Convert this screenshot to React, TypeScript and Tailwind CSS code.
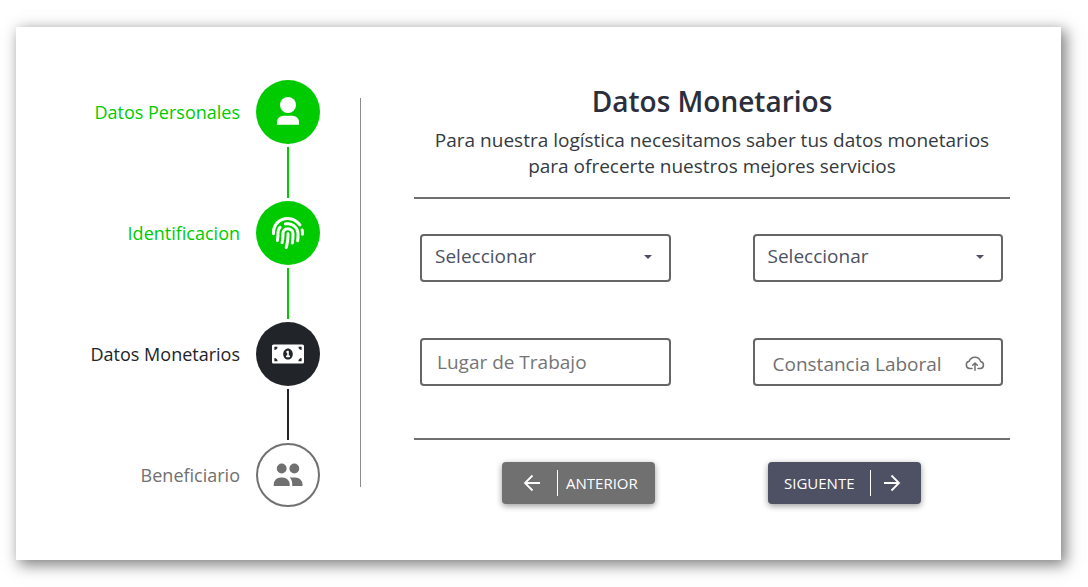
import type { ReactNode } from "react";
import { FaFingerprint, FaMoneyBillAlt } from "react-icons/fa";

type Tone = "done" | "current" | "pending";

const PersonIcon = () => (
  <svg viewBox="0 0 32 32" className="size-8" fill="currentColor" aria-hidden="true">
    <circle cx="16" cy="9" r="8" />
    <path d="M5 28.700v-2.500a6.500 6.500 0 0 1 6.500-6.500h9a6.500 6.500 0 0 1 6.500 6.500v2.500z" />
  </svg>
);

const GroupIcon = () => (
  <svg viewBox="0 0 32 32" className="size-8" fill="currentColor" aria-hidden="true">
    <circle cx="9.700" cy="9.500" r="4.900" />
    <circle cx="22.300" cy="9.500" r="4.900" />
    <path d="M1.700 27v-1.500a7 7 0 0 1 7-7h2a7 7 0 0 1 7 7V27z" />
    <path d="M20.200 27v-2.200c0-2.500-1-4.700-2.600-6.300h5.900a7 7 0 0 1 7 7V27z" />
  </svg>
);

const CloudUploadIcon = () => (
  <svg viewBox="0 0 20 20" className="size-5" fill="none" stroke="currentColor" strokeWidth="1.500" strokeLinecap="round" strokeLinejoin="round" aria-hidden="true">
    <path d="M7 14.500H4.800a3.700 3.700 0 0 1-.6-7.300A6 6 0 0 1 15.600 7.400a3.600 3.600 0 0 1-.4 7.100H13" />
    <path d="M10 16.200V9.300M7.700 11.300 10 9l2.300 2.300" />
  </svg>
);

const ArrowIcon = ({ back = false }: { back?: boolean }) => (
  <svg viewBox="0 0 18 18" className="size-[18px]" fill="none" stroke="currentColor" strokeWidth="1.800" aria-hidden="true">
    <path d={back ? "M17 9H2M9.500 1.500 2 9l7.500 7.500" : "M1 9H16M8.500 1.500 16 9l-7.500 7.500"} />
  </svg>
);

const steps: { label: string; tone: Tone; icon: ReactNode }[] = [
  { label: "Datos Personales", tone: "done", icon: <PersonIcon /> },
  { label: "Identificacion", tone: "done", icon: <FaFingerprint className="size-8" /> },
  { label: "Datos Monetarios", tone: "current", icon: <FaMoneyBillAlt className="size-8" /> },
  { label: "Beneficiario", tone: "pending", icon: <GroupIcon /> },
];

const textTone = { done: "text-[#00cb00]", current: "text-[#212529]", pending: "text-[#707070]" };
const circleTone = {
  done: "bg-[#00cb00] text-white",
  current: "bg-[#212529] text-white",
  pending: "border-2 border-[#707070] bg-white text-[#707070]",
};
const lineTone = { done: "bg-[#00cb00]", current: "bg-[#212529]", pending: "bg-[#707070]" };

const field = "h-12 w-full rounded border-2 border-[#666] bg-white";

function Picker({ label }: { label: string }) {
  return (
    <div className="relative">
      <select aria-label={label} className={`${field} appearance-none px-[13px] pb-1 text-[#4d5163]`}>
        <option>Seleccionar</option>
      </select>
      <svg viewBox="0 0 8 4" className="pointer-events-none absolute top-[21px] right-[19px] h-1 w-2" fill="#4d5163" aria-hidden="true">
        <path d="M0 0h8L4 4z" />
      </svg>
    </div>
  );
}

export default function App() {
  return (
    <div className="pt-[27px] pr-[27px] pb-[27px] pl-4 font-['Open_Sans',sans-serif] text-[19px] leading-[26px]">
      <main className="flex bg-white pt-[53px] pr-[51px] pb-[53px] pl-12 shadow-[4px_4px_14px_1px_rgba(0,0,0,0.5)]">
        <nav aria-label="Progreso" className="w-64 shrink-0">
          <ol>
            {steps.map((step, i) => (
              <li key={step.label} className={`flex items-start justify-end gap-4 ${textTone[step.tone]}`}>
                <span className="flex h-16 items-center text-lg">{step.label}</span>
                <div className="flex flex-col items-center">
                  <span className={`flex size-16 items-center justify-center rounded-full ${circleTone[step.tone]}`}>{step.icon}</span>
                  {i < steps.length - 1 && <span className={`my-[3px] h-[51px] w-0.5 ${lineTone[step.tone]}`} />}
                </div>
              </li>
            ))}
          </ol>
        </nav>
        <div className="mt-[18px] mr-[53px] mb-5 ml-10 w-px shrink-0 bg-[#8c8c8c]" />
        <section className="min-w-0 flex-1">
          <header className="border-b-2 border-[#707070] pb-[18px] text-center text-[#343a40]">
            <h1 className="pt-[3px] pb-2 text-[28px] leading-9 font-semibold text-[#2b2e3b]">Datos Monetarios</h1>
            <p className="mx-auto max-w-[580px]">Para nuestra logística necesitamos saber tus datos monetarios para ofrecerte nuestros mejores servicios</p>
          </header>
          <form onSubmit={(e) => e.preventDefault()}>
            <div className="grid grid-cols-2 gap-x-[82px] gap-y-14 border-b-2 border-[#707070] pt-[35px] pr-[7px] pb-[52px] pl-1.5">
              <Picker label="Moneda" />
              <Picker label="Ingreso" />
              <input aria-label="Lugar de Trabajo" placeholder="Lugar de Trabajo" className={`${field} px-[15px] placeholder:text-[#757575]`} />
              <label className={`${field} flex cursor-pointer items-center justify-between pt-1 pr-4 pl-[18px] text-[#707070]`}>
                Constancia Laboral
                <CloudUploadIcon />
                <input type="file" className="sr-only" />
              </label>
            </div>
            <div className="flex justify-between pt-[22px] pr-[89px] pl-[88px] text-[15px] leading-6 text-white">
              <button type="button" className="flex h-[42px] w-[153px] items-center rounded-sm bg-[#707070] pl-[21px] shadow-[0_2px_6px_rgba(0,0,0,0.4)]">
                <ArrowIcon back />
                <span className="ml-4 h-[26px] w-px bg-white" />
                <span className="ml-2">ANTERIOR</span>
              </button>
              <button type="submit" className="flex h-[42px] w-[153px] items-center rounded-sm bg-[#4d5163] pl-4 shadow-[0_2px_6px_rgba(0,0,0,0.4)]">
                <span>SIGUENTE</span>
                <span className="mr-3 ml-4 h-[26px] w-px bg-white" />
                <ArrowIcon />
              </button>
            </div>
          </form>
        </section>
      </main>
    </div>
  );
}
